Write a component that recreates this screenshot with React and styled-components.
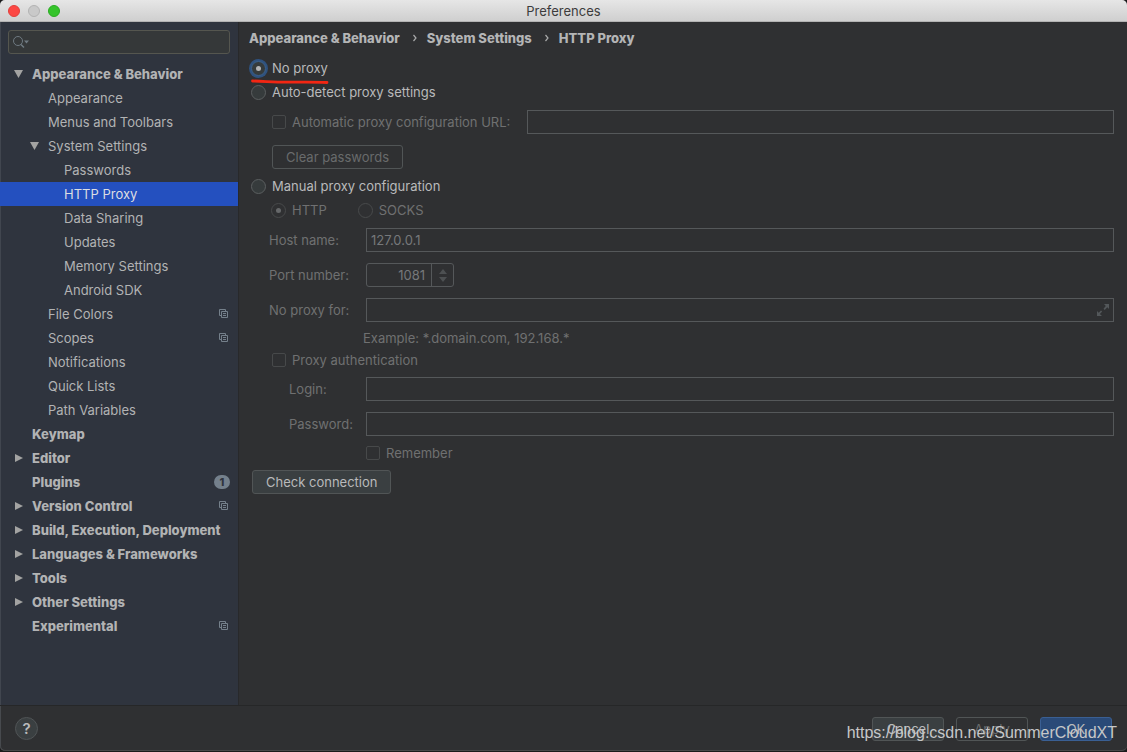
import { useState } from 'react';
import styled, { createGlobalStyle } from 'styled-components';

const GlobalStyle = createGlobalStyle`
  * {
    box-sizing: border-box;
  }

  body {
    margin: 0;
    background: #1b1b1c;
    font-family: Inter, 'Liberation Sans', sans-serif;
    font-size: 13px;
    line-height: 16px;
    color: #b4b5b6;
  }

  button, input {
    font: inherit;
    color: inherit;
    margin: 0;
  }
`;

const Window = styled.div`
  position: relative;
  display: flex;
  flex-direction: column;
  min-height: calc(100vh - 1px);
  background: #2f3032;
  border-radius: 5px;
  box-shadow: inset 1px 0 #474a4e, inset 0 -1px #474849;
  overflow: hidden;
`;

const TitleBar = styled.header`
  position: relative;
  display: flex;
  align-items: center;
  justify-content: center;
  height: 22px;
  background: linear-gradient(#e6e6e6, #cfcfcf);
  border-bottom: 1px solid #b3b3b3;
  color: #3c3c3c;
`;

const Lights = styled.div`
  position: absolute;
  left: 8px;
  top: 5px;
  display: flex;
  gap: 8px;
`;

const Light = styled.button`
  width: 12px;
  height: 12px;
  padding: 0;
  border: 1px solid ${(p) => p.$edge};
  border-radius: 50%;
  background: ${(p) => p.$fill};
`;

const Title = styled.h1`
  margin: 0;
  font-size: 13px;
  font-weight: 400;
`;

const Body = styled.div`
  display: flex;
  flex: 1;
`;

const Sidebar = styled.aside`
  width: 239px;
  flex-shrink: 0;
  padding-top: 8px;
  background: #2f343e;
  border-right: 1px solid #28292b;
  box-shadow: inset 1px 0 #41464f;
`;

const SearchBox = styled.label`
  display: flex;
  align-items: center;
  height: 24px;
  margin: 0 8px 8px;
  padding: 0 4px;
  gap: 4px;
  background: #353839;
  border: 1px solid #55564f;
  border-radius: 3px;

  input {
    flex: 1;
    min-width: 0;
    padding: 0;
    border: none;
    outline: none;
    background: none;
  }
`;

const Tree = styled.ul`
  margin: 0;
  padding: 0;
  list-style: none;
`;

const TreeRow = styled.a`
  display: flex;
  align-items: center;
  height: 24px;
  padding-left: ${(p) => 12 + p.$level * 16}px;
  padding-right: 8px;
  padding-bottom: 1px;
  font-weight: ${(p) => (p.$level === 0 ? 800 : 400)};
  color: ${(p) => (p.$selected ? '#dcdee2' : '#b2b3b4')};
  background: ${(p) => (p.$selected ? '#2450bf' : 'none')};
  text-decoration: none;
  white-space: nowrap;

  & > :nth-child(2) {
    flex: 1;
  }
`;

const Twisty = styled.span`
  display: flex;
  width: 20px;
  flex-shrink: 0;
`;

const Badge = styled.span`
  width: 16px;
  height: 14px;
  border-radius: 7px;
  background: #74808c;
  color: #2f343e;
  font-size: 11px;
  line-height: 14px;
  text-align: center;
`;

const Main = styled.main`
  flex: 1;
  min-width: 0;
  padding: 7px 13px 8px 10px;
`;

const Crumbs = styled.nav`
  display: flex;
  align-items: center;
  height: 18px;
  margin-bottom: 9px;
  font-weight: 800;

  a {
    color: inherit;
    text-decoration: none;
  }

  svg {
    margin: 0 10px 0 13px;
  }
`;

const Option = styled.label`
  position: relative;
  display: flex;
  align-items: center;
  width: max-content;
  height: 24px;
  gap: 6px;
  color: ${(p) => (p.$off ? '#6f7071' : '#b9babb')};
`;

const Radio = styled.input.attrs({ type: 'radio' })`
  appearance: none;
  display: grid;
  place-items: center;
  width: 15px;
  height: 15px;
  border: 1px solid #5b5f60;
  border-radius: 50%;
  background: #363b3c;
  outline: none;

  &:checked::after {
    content: '';
    width: 5px;
    height: 5px;
    border-radius: 50%;
    background: #b4b5b6;
  }

  &:checked:enabled {
    border-color: #3b618c;
    box-shadow: 0 0 0 2px #2f527f;
  }

  &:disabled {
    border-color: #484a4b;
    background: none;
  }

  &:disabled::after {
    background: #66686a;
  }
`;

const Check = styled.input.attrs({ type: 'checkbox' })`
  appearance: none;
  width: 14px;
  height: 14px;
  border: 1px solid #47494a;
  border-radius: 2px;

  &:checked {
    background: #6f7071;
  }
`;

const Underline = styled.svg`
  position: absolute;
  left: -1px;
  top: 22px;
  pointer-events: none;
`;

const RadioColumn = styled.div`
  padding-left: 2px;
`;

const UrlRow = styled.div`
  display: flex;
  align-items: center;
  gap: 17px;
  margin: 6px 0 11px 23px;
`;

const Field = styled.input`
  flex: 1;
  width: 100%;
  min-width: 0;
  height: 24px;
  padding: 0 4px;
  border: 1px solid #55585a;
  border-radius: 0;
  background: none;
  color: #76787a;
  outline: none;
`;

const Button = styled.button`
  height: 24px;
  min-width: 72px;
  padding: 0 13px;
  border: 1px solid ${(p) => (p.$primary ? '#3a5f93' : '#515556')};
  border-radius: 3px;
  background: ${(p) => (p.$primary ? '#2a4a78' : '#3a3f41')};
  color: #b9babb;

  &:disabled {
    background: none;
    color: #696b6c;
  }
`;

const ClearRow = styled.div`
  display: flex;
  margin: 0 0 5px 23px;
`;

const ProtocolRow = styled.div`
  display: flex;
  gap: 31px;
  margin: 0 0 6px 22px;
`;

const Form = styled.div`
  margin-left: 20px;
`;

const FormRow = styled.div`
  display: grid;
  grid-template-columns: 97px 1fr;
  align-items: center;
  margin-bottom: ${(p) => p.$gap ?? 11}px;
  color: #6f7071;
`;

const FormLabel = styled.label`
  padding-left: ${(p) => (p.$indent ? 20 : 0)}px;
`;

const Spinner = styled.div`
  display: flex;
  width: 88px;
  height: 24px;
  border: 1px solid #55585a;
  border-radius: 3px;

  input {
    flex: 1;
    min-width: 0;
    padding: 0 6px;
    border: none;
    border-right: 1px solid #55585a;
    background: none;
    color: #76787a;
    text-align: right;
    outline: none;
  }
`;

const SpinButtons = styled.div`
  display: flex;
  flex-direction: column;
  align-items: center;
  justify-content: center;
  gap: 3px;
  width: 21px;

  button {
    display: flex;
    padding: 0;
    border: none;
    background: none;
    color: #4d5052;
  }
`;

const Expandable = styled.div`
  position: relative;
  display: flex;

  svg {
    position: absolute;
    right: 5px;
    top: 6px;
  }
`;

const Hint = styled.p`
  margin: 0 0 2px 94px;
  padding-top: 8px;
  color: #6f7071;
`;

const AuthBlock = styled.div`
  margin: 0 0 5px 3px;
`;

const RememberRow = styled.div`
  margin: 0 0 5px 97px;
`;

const CheckRow = styled.div`
  display: flex;
  padding-left: 3px;
`;

const Footer = styled.footer`
  display: flex;
  align-items: center;
  gap: 12px;
  height: 46px;
  padding: 0 15px;
  border-top: 1px solid #262728;
`;

const Help = styled.button`
  width: 23px;
  height: 23px;
  margin-right: auto;
  padding: 0;
  border: 1px solid #505456;
  border-radius: 50%;
  background: #3a3f41;
  color: #b9babb;
  font-size: 15px;
  font-weight: 600;
  line-height: 20px;
`;

const Watermark = styled.div`
  position: absolute;
  right: 10px;
  bottom: 8px;
  font-family: 'Liberation Sans', Arial, sans-serif;
  font-size: 16px;
  line-height: 20px;
  color: #c6c7c8;
  pointer-events: none;
`;

const tree = [
  { name: 'Appearance & Behavior', level: 0, open: true },
  { name: 'Appearance', level: 1 },
  { name: 'Menus and Toolbars', level: 1 },
  { name: 'System Settings', level: 1, open: true },
  { name: 'Passwords', level: 2 },
  { name: 'HTTP Proxy', level: 2 },
  { name: 'Data Sharing', level: 2 },
  { name: 'Updates', level: 2 },
  { name: 'Memory Settings', level: 2 },
  { name: 'Android SDK', level: 2 },
  { name: 'File Colors', level: 1, project: true },
  { name: 'Scopes', level: 1, project: true },
  { name: 'Notifications', level: 1 },
  { name: 'Quick Lists', level: 1 },
  { name: 'Path Variables', level: 1 },
  { name: 'Keymap', level: 0 },
  { name: 'Editor', level: 0, open: false },
  { name: 'Plugins', level: 0, count: 1 },
  { name: 'Version Control', level: 0, open: false, project: true },
  { name: 'Build, Execution, Deployment', level: 0, open: false },
  { name: 'Languages & Frameworks', level: 0, open: false },
  { name: 'Tools', level: 0, open: false },
  { name: 'Other Settings', level: 0, open: false },
  { name: 'Experimental', level: 0, project: true },
];

const Arrow = ({ open }) => (
  <svg width="13" height="10" viewBox="0 0 13 10" fill="#a3a3a2">
    <path d={open ? 'M2 1h9L6.500 9z' : 'M3 1l8 4-8 4z'} />
  </svg>
);

const ProjectIcon = () => (
  <svg width="12" height="11" viewBox="0 0 12 11" fill="none" stroke="#75808b">
    <path d="M3 7.500H1.500v-6h6V3" />
    <path d="M3.500 3.500h6v6h-6zM5 5.500h3M5 7.500h3" />
  </svg>
);

const SearchIcon = () => (
  <svg width="17" height="14" viewBox="0 0 17 14" fill="none" stroke="#6f7a82">
    <circle cx="5" cy="6" r="4.500" />
    <path d="M8 9.500l3 3" strokeWidth="1.500" />
    <path d="M11 5.500h5l-2.500 3z" fill="#6f7a82" stroke="none" />
  </svg>
);

const Chevron = () => (
  <svg width="4" height="8" viewBox="0 0 4 8" fill="none" stroke="#a9aaab" strokeWidth="1.200">
    <path d="M.5 1l2.500 3-2.500 3" />
  </svg>
);

const ExpandIcon = () => (
  <svg width="12" height="12" viewBox="0 0 12 12" fill="#53575a">
    <path d="M7 0h5v5l-1.700-1.700L7.700 5.900l-1.200-1.200 2.300-2.600z" />
    <path d="M5 12H0V7l1.700 1.700 2.300-2.300 1.200 1.200-2.300 2.300z" />
  </svg>
);

const App = () => {
  const [mode, setMode] = useState('none');
  const [selected, setSelected] = useState('HTTP Proxy');
  const auto = mode === 'auto';
  const manual = mode === 'manual';

  return (
    <>
      <GlobalStyle />
      <Window>
        <TitleBar>
          <Lights>
            <Light aria-label="Close" $fill="#fc4844" $edge="#e0403c" />
            <Light aria-label="Minimize" $fill="#c9c9c9" $edge="#b2b2b2" />
            <Light aria-label="Zoom" $fill="#35c42b" $edge="#2aab22" />
          </Lights>
          <Title>Preferences</Title>
        </TitleBar>
        <Body>
          <Sidebar>
            <SearchBox>
              <SearchIcon />
              <input type="text" aria-label="Search settings" />
            </SearchBox>
            <Tree>
              {tree.map((item) => (
                <li key={item.name}>
                  <TreeRow
                    href="#"
                    $level={item.level}
                    $selected={item.name === selected}
                    onClick={() => setSelected(item.name)}
                  >
                    <Twisty>{item.open !== undefined && <Arrow open={item.open} />}</Twisty>
                    <span>{item.name}</span>
                    {item.project && <ProjectIcon />}
                    {item.count && <Badge>{item.count}</Badge>}
                  </TreeRow>
                </li>
              ))}
            </Tree>
          </Sidebar>
          <Main>
            <Crumbs>
              <a href="#">Appearance &amp; Behavior</a>
              <Chevron />
              <a href="#">System Settings</a>
              <Chevron />
              <span>HTTP Proxy</span>
            </Crumbs>
            <RadioColumn>
              <Option>
                <Radio name="mode" checked={mode === 'none'} onChange={() => setMode('none')} />
                No proxy
                <Underline width="80" height="7" viewBox="0 0 80 7" fill="none" stroke="#f22613" strokeWidth="2.800" strokeLinecap="round">
                  <path d="M2.500 3c10 0 20 1.200 34 1.200S62 3.800 77 4.500" />
                </Underline>
              </Option>
              <Option>
                <Radio name="mode" checked={auto} onChange={() => setMode('auto')} />
                Auto-detect proxy settings
              </Option>
            </RadioColumn>
            <UrlRow>
              <Option $off={!auto}>
                <Check disabled={!auto} />
                Automatic proxy configuration URL:
              </Option>
              <Field type="text" aria-label="Automatic proxy configuration URL" disabled={!auto} />
            </UrlRow>
            <ClearRow>
              <Button disabled={!auto}>Clear passwords</Button>
            </ClearRow>
            <RadioColumn>
              <Option>
                <Radio name="mode" checked={manual} onChange={() => setMode('manual')} />
                Manual proxy configuration
              </Option>
            </RadioColumn>
            <ProtocolRow>
              <Option $off={!manual}>
                <Radio name="protocol" defaultChecked disabled={!manual} />
                HTTP
              </Option>
              <Option $off={!manual}>
                <Radio name="protocol" disabled={!manual} />
                SOCKS
              </Option>
            </ProtocolRow>
            <Form>
              <FormRow>
                <FormLabel htmlFor="host">Host name:</FormLabel>
                <Field id="host" type="text" defaultValue="127.0.0.1" disabled={!manual} />
              </FormRow>
              <FormRow>
                <FormLabel htmlFor="port">Port number:</FormLabel>
                <Spinner>
                  <input id="port" type="text" defaultValue="1081" disabled={!manual} />
                  <SpinButtons>
                    <button aria-label="Increase port" disabled={!manual}>
                      <svg width="10" height="5" viewBox="0 0 10 5" fill="currentColor"><path d="M1 5l4-5 4 5z" /></svg>
                    </button>
                    <button aria-label="Decrease port" disabled={!manual}>
                      <svg width="10" height="5" viewBox="0 0 10 5" fill="currentColor"><path d="M1 0l4 5 4-5z" /></svg>
                    </button>
                  </SpinButtons>
                </Spinner>
              </FormRow>
              <FormRow $gap={0}>
                <FormLabel htmlFor="exceptions">No proxy for:</FormLabel>
                <Expandable>
                  <Field id="exceptions" type="text" disabled={!manual} />
                  <ExpandIcon />
                </Expandable>
              </FormRow>
              <Hint>Example: *.domain.com, 192.168.*</Hint>
              <AuthBlock>
                <Option $off={!manual}>
                  <Check disabled={!manual} />
                  Proxy authentication
                </Option>
              </AuthBlock>
              <FormRow>
                <FormLabel htmlFor="login" $indent>Login:</FormLabel>
                <Field id="login" type="text" disabled={!manual} />
              </FormRow>
              <FormRow $gap={5}>
                <FormLabel htmlFor="password" $indent>Password:</FormLabel>
                <Field id="password" type="password" disabled={!manual} />
              </FormRow>
              <RememberRow>
                <Option $off={!manual}>
                  <Check disabled={!manual} />
                  Remember
                </Option>
              </RememberRow>
            </Form>
            <CheckRow>
              <Button>Check connection</Button>
            </CheckRow>
          </Main>
        </Body>
        <Footer>
          <Help aria-label="Help">?</Help>
          <Button>Cancel</Button>
          <Button disabled>Apply</Button>
          <Button $primary>OK</Button>
        </Footer>
        <Watermark>https://blog.csdn.net/SummerCloudXT</Watermark>
      </Window>
    </>
  );
};

export default App;
